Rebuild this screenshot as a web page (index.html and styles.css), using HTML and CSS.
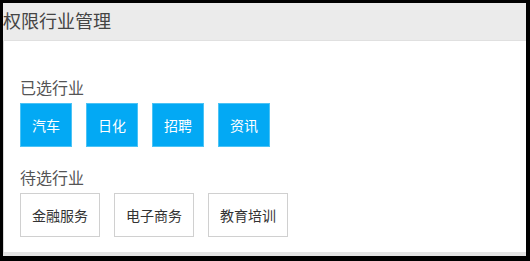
FILE: index.html
```html
<!DOCTYPE html>
<html lang="zh-CN">
<head>
    <meta charset="UTF-8">
    <title>权限行业管理</title>
    <link rel="stylesheet" href="styles.css">
</head>
<body>
    <div class="panel">
        <div class="panel-header">权限行业管理</div>
        <div class="panel-body">
            <div class="group-title">已选行业</div>
            <div class="tag-list">
                <span class="tag tag-active">汽车</span>
                <span class="tag tag-active">日化</span>
                <span class="tag tag-active">招聘</span>
                <span class="tag tag-active">资讯</span>
            </div>
            <div class="group-title second">待选行业</div>
            <div class="tag-list">
                <span class="tag">金融服务</span>
                <span class="tag">电子商务</span>
                <span class="tag">教育培训</span>
            </div>
        </div>
    </div>
</body>
</html>
```

FILE: styles.css
```css
* {
    margin: 0;
    padding: 0;
    box-sizing: border-box;
}
html, body {
    height: 100%;
}
body {
    background: #000;
    font-family: "Noto Sans CJK SC", "Noto Sans", sans-serif;
    color: #333;
    overflow: hidden;
}
.panel {
    margin: 3px 4px 0 3px;
    height: 253px;
    background: #fff;
    border-left: 1px solid #d8d8d8;
    border-bottom: 4px solid #e4e4e4;
    display: flex;
    flex-direction: column;
}
.panel-header {
    height: 38px;
    line-height: 34px;
    background: #ebebeb;
    border-bottom: 1px solid #e0e0e0;
    font-size: 18px;
    color: #444;
    padding-left: 0;
    margin-left: -1px;
}
.panel-body {
    padding: 36px 16px 0;
}
.group-title {
    font-size: 16px;
    line-height: 20px;
    color: #555;
    margin-bottom: 6px;
}
.group-title.second {
    margin-top: 20px;
}
.tag-list {
    display: flex;
    gap: 14px;
}
.tag {
    display: block;
    height: 44px;
    line-height: 42px;
    padding: 0 11px;
    font-size: 14px;
    color: #333;
    border: 1px solid #d0d0d0;
    background: #fff;
}
.tag-active {
    height: 44px;
    background: #03a9f4;
    border-color: #4cc3f5;
    color: #fff;
}
```
